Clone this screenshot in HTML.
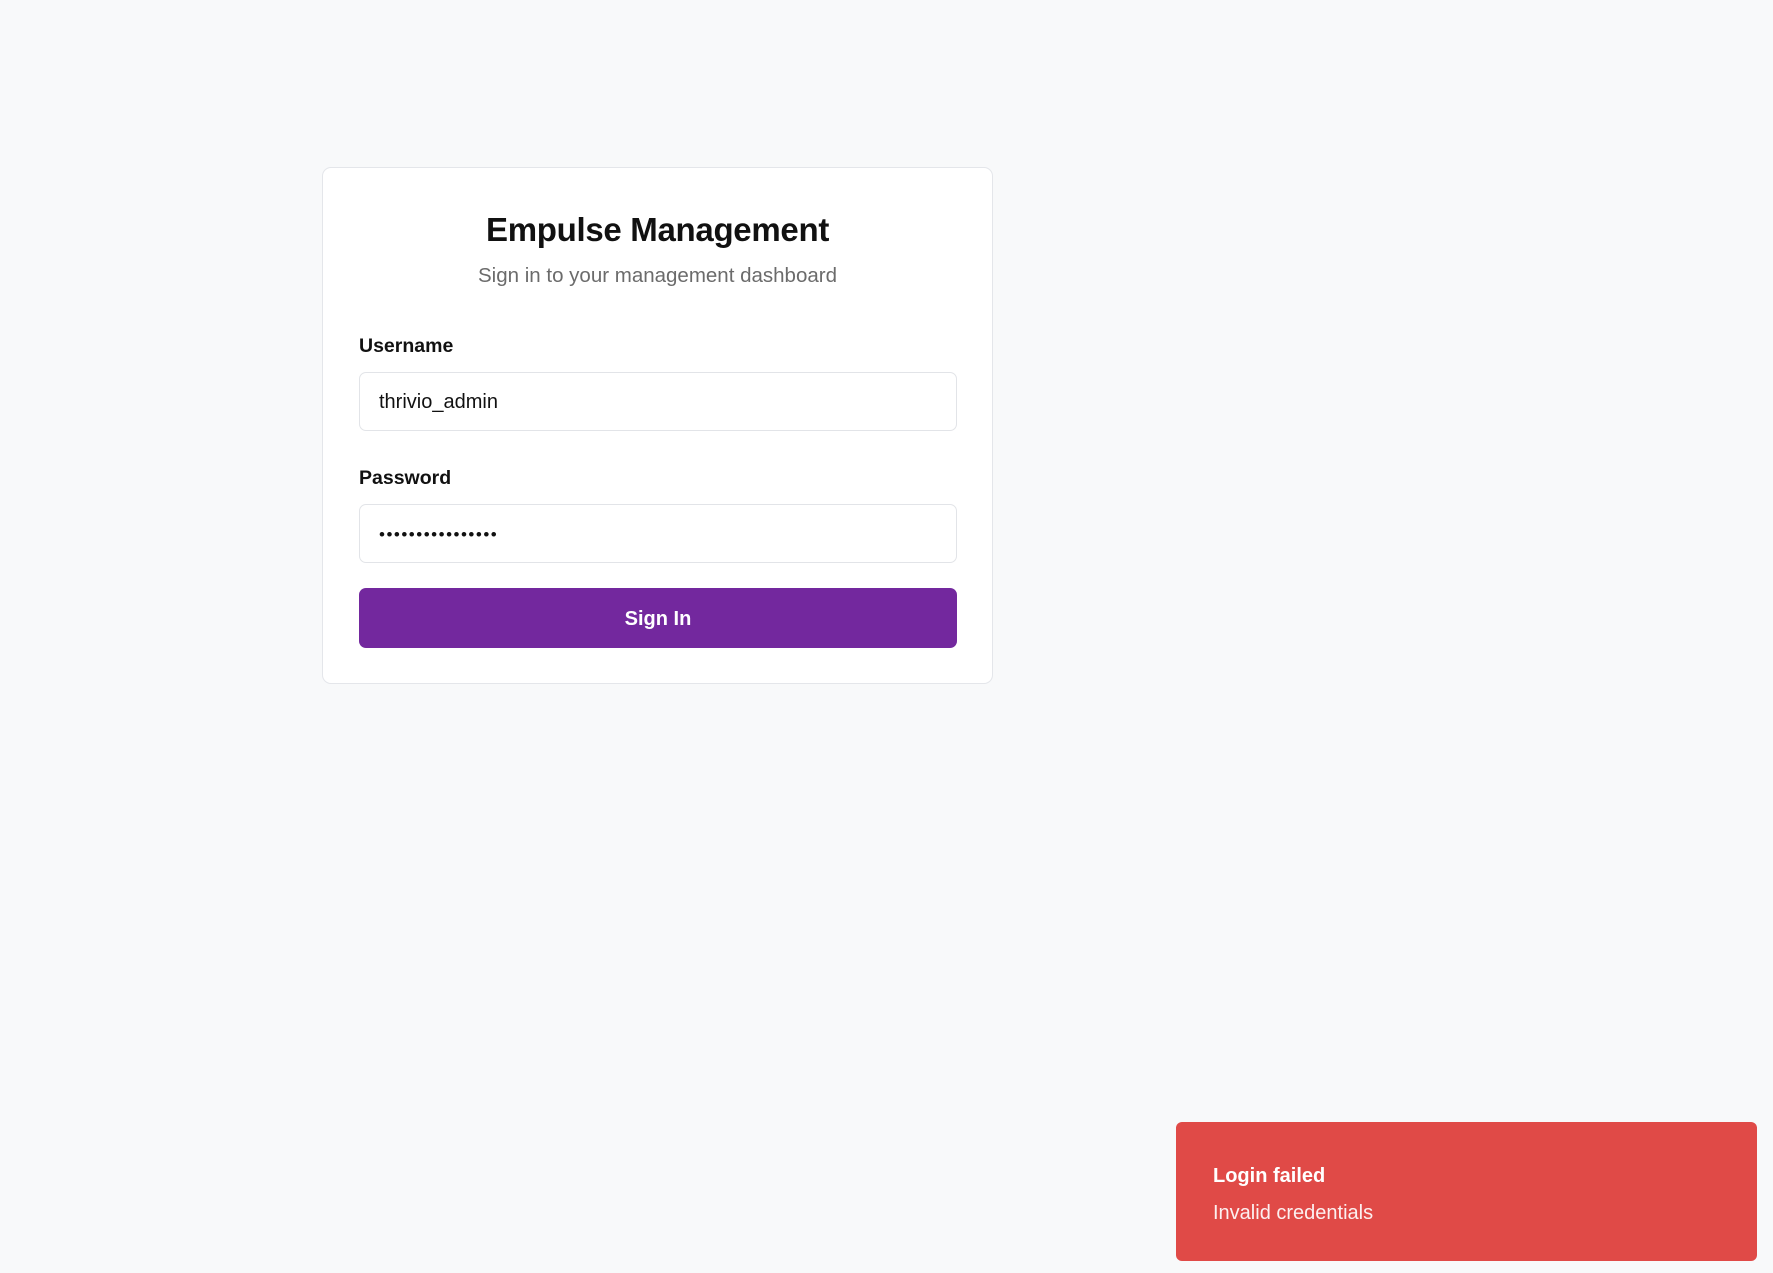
<!DOCTYPE html>
<html><head><meta charset="utf-8"><style>
*{box-sizing:border-box;margin:0;padding:0}
body{width:1773px;height:1273px;background:#f8f9fa;font-family:"Liberation Sans",sans-serif;position:relative;overflow:hidden;color:#111}
.card{position:absolute;left:322px;top:167px;width:671px;height:517px;background:#fff;border:1px solid #e4e6ea;border-radius:9px}
h1{position:absolute;left:322px;width:671px;top:211px;text-align:center;font-size:33px;font-weight:bold;letter-spacing:-0.3px}
.sub{position:absolute;left:322px;width:671px;top:264px;text-align:center;font-size:20.5px;color:#6b6b6b}
.lbl{position:absolute;left:359px;font-size:19.5px;font-weight:bold}
.inp{position:absolute;left:359px;width:598px;height:59px;border:1px solid #e2e4e8;border-radius:7px;background:#fff;font-size:20px;padding-left:19px;line-height:59px}
.btn{position:absolute;left:359px;top:588px;width:598px;height:60px;background:#73289e;border-radius:7px;color:#fff;font-size:20px;font-weight:bold;text-align:center;line-height:62px}
.toast{position:absolute;left:1176px;top:1122px;width:581px;height:139px;background:#e04a47;border-radius:6px;color:#fff;padding:43px 0 0 37px}
</style></head><body>
<div class="card"></div>
<h1>Empulse Management</h1>
<div class="sub">Sign in to your management dashboard</div>
<div class="lbl" style="top:335px">Username</div>
<div class="inp" style="top:372px">thrivio_admin</div>
<div class="lbl" style="top:467px">Password</div>
<div class="inp" style="top:504px;font-size:17px;letter-spacing:1.5px">••••••••••••••••</div>
<div class="btn">Sign In</div>
<div class="toast"><div style="font-size:20px;font-weight:bold">Login failed</div><div style="font-size:20px;margin-top:14px;opacity:.92">Invalid credentials</div></div>
</body></html>
